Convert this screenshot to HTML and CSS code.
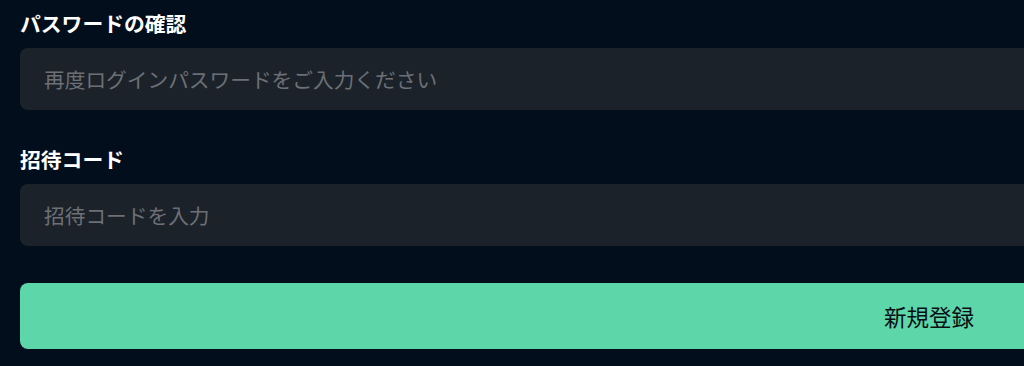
FILE: index.html
```html
<!doctype html>
<html>
<head>
    <meta charset="utf-8">
    <title>新規登録</title>
    <link rel="stylesheet" href="styles.css">
</head>
<body>
<form class="register" onsubmit="return false;">
    <div class="field">
        <label class="field-label" for="pwConfirm">パスワードの確認</label>
        <input id="pwConfirm" class="field-input" type="password" placeholder="再度ログインパスワードをご入力ください">
    </div>

    <div class="field">
        <label class="field-label" for="inviteCode">招待コード</label>
        <input id="inviteCode" class="field-input" type="text" placeholder="招待コードを入力">
    </div>

    <button class="submit-btn" type="submit">新規登録</button>
</form>
</body>
</html>
```

FILE: styles.css
```css
html, body {
    margin: 0;
    background: #020e1c;
    overflow: hidden;
}

body {
    font-family: "Noto Sans CJK JP", "Noto Sans", sans-serif;
    color: #ffffff;
}

.register {
    width: 1818px;
    padding: 10px 20px 0 20px;
    display: flex;
    flex-direction: column;
}

.field {
    display: flex;
    flex-direction: column;
    gap: 12px;
    margin-bottom: 36px;
}

.field-label {
    font-size: 20.8px;
    font-weight: 700;
    line-height: 26px;
    color: #ffffff;
}

.field-input {
    box-sizing: border-box;
    height: 62px;
    border: none;
    border-radius: 8px;
    background: #1c222a;
    padding: 0 24px;
    font-family: inherit;
    font-size: 20.7px;
    color: #ffffff;
    outline: none;
}

.field-input::placeholder {
    color: #6c7076;
}

.submit-btn {
    margin-top: 1px;
    height: 66px;
    border: none;
    border-radius: 8px;
    background: #5dd6aa;
    color: #0a0f14;
    font-family: inherit;
    font-size: 22.5px;
    cursor: pointer;
}
```
